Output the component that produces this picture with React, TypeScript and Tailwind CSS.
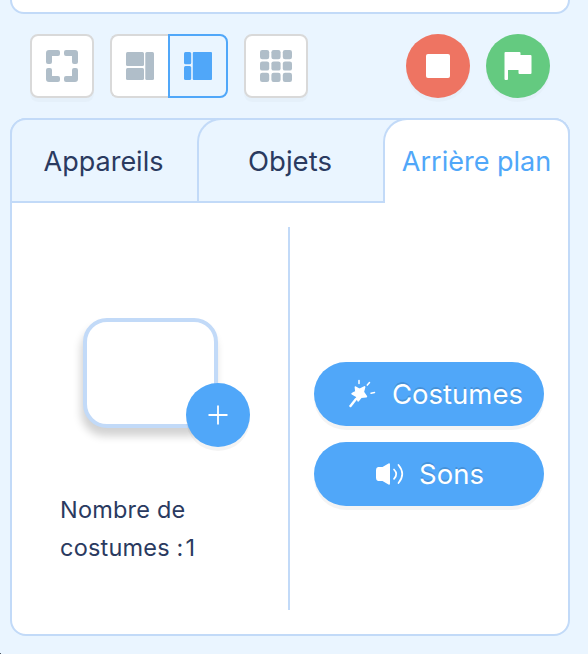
import React from 'react';

interface TabProps {
  label: string;
  className: string;
  textClass?: string;
}

const FullscreenIcon = () => (
  <svg width="32" height="32" viewBox="0 0 32 32" fill="#b0bec9">
    <path d="M3 0h9a2 2 0 0 1 2 2v2a2 2 0 0 1-2 2H6v6a2 2 0 0 1-2 2H2a2 2 0 0 1-2-2V3a3 3 0 0 1 3-3z" />
    <path d="M29 0H20a2 2 0 0 0-2 2v2a2 2 0 0 0 2 2h6v6a2 2 0 0 0 2 2h2a2 2 0 0 0 2-2V3a3 3 0 0 0-3-3z" />
    <path d="M3 32h9a2 2 0 0 0 2-2v-2a2 2 0 0 0-2-2H6v-6a2 2 0 0 0-2-2H2a2 2 0 0 0-2 2v9a3 3 0 0 0 3 3z" />
    <path d="M29 32H20a2 2 0 0 1-2-2v-2a2 2 0 0 1 2-2h6v-6a2 2 0 0 1 2-2h2a2 2 0 0 1 2 2v9a3 3 0 0 1-3 3z" />
  </svg>
);

const SmallStageIcon = () => (
  <svg width="28" height="28" viewBox="0 0 28 28" fill="#b0bec9">
    <rect width="18" height="14" rx="1.5" />
    <rect y="16" width="18" height="12" rx="1.5" />
    <rect x="19.3" width="8.7" height="28" rx="1.5" />
  </svg>
);

const LargeStageIcon = () => (
  <svg width="28" height="28" viewBox="0 0 28 28" fill="#50a7f9">
    <rect width="7.2" height="12.2" rx="1.5" />
    <rect y="14" width="7.2" height="14" rx="1.5" />
    <rect x="8.8" width="19.2" height="28" rx="1" />
  </svg>
);

const GridIcon = () => (
  <svg width="32" height="32" viewBox="0 0 32 32" fill="#b0bec9">
    {[0, 11.4, 22.8].map(y =>
      [0, 11.4, 22.8].map(x => <rect key={`${x}-${y}`} x={x} y={y} width="9.2" height="9.2" rx="2.2" />)
    )}
  </svg>
);

const FlagIcon = () => (
  <svg width="28" height="28" viewBox="0 0 28 28" fill="#fff">
    <path d="M1.5 0H15.500a1 1 0 0 1 1 1V3H26.500a1 1 0 0 1 1 1V21a1 1 0 0 1-1 1H15.500a1 1 0 0 1-1-1V18H4V27a1 1 0 0 1-1 1H1.500A1 1 0 0 1 .5 27V1a1 1 0 0 1 1-1z" />
  </svg>
);

const WandIcon = () => (
  <svg width="28" height="30" viewBox="0 0 28 30" fill="none" stroke="#fff" strokeLinecap="round" strokeLinejoin="round">
    <path d="M7.500 8.200 11.500 10.500 16.500 8 15.200 13 18.300 17.500 13.200 18 10.200 21.800 8.500 17.200 4.200 14.800 8 12.500z" fill="#fff" strokeWidth="1.800" />
    <path d="M2.500 27 8 20" strokeWidth="2.400" />
    <path d="M11 1.500v3M21.500 3.500l-2.200 2.600M23 14.200l3.500-.6" strokeWidth="1.500" />
  </svg>
);

const SpeakerIcon = () => (
  <svg width="28" height="22" viewBox="0 0 28 22" fill="none" stroke="#fff" strokeLinecap="round">
    <path d="M2 4H6.500L12.500 .4Q14 0 14 1.500V20.500Q14 22 12.500 21.600L6.500 18H2Q0 17.500 0 15V7Q0 4.500 2 4z" fill="#fff" stroke="none" />
    <path d="M18 6.500Q22.500 11 18 15.800" strokeWidth="1.700" />
    <path d="M22.500 2Q30 11 22.500 20" strokeWidth="1.700" />
  </svg>
);

const Tab: React.FC<TabProps> = ({ label, className, textClass = 'text-[27px]' }) => (
  <button className={`flex items-center justify-center border-[#c2daf8] whitespace-nowrap ${className}`}>
    <span className={textClass}>{label}</span>
  </button>
);

const App: React.FC = () => {
  return (
    <div className="relative h-[654px] w-[588px] overflow-hidden bg-[#eaf5ff] pr-[18px] pl-[10px] text-[#2a3a60] font-['Inter',sans-serif]">
      <div className="h-[14px] rounded-b-[16px] border-2 border-t-0 border-[#c2daf8] bg-white" />

      <div className="mt-5 flex h-16 px-5">
        <button className="flex size-16 items-center justify-center rounded-lg border-2 border-[#d9d9d9] bg-white shadow-[0_4px_0_rgba(0,0,0,0.02)]">
          <FullscreenIcon />
        </button>
        <div className="ml-4 flex">
          <button className="flex w-[58px] items-center justify-center rounded-l-lg border-2 border-r-0 border-[#d9d9d9] bg-white">
            <SmallStageIcon />
          </button>
          <button className="flex w-[60px] items-center justify-center rounded-r-lg border-2 border-[#50a7f9]">
            <LargeStageIcon />
          </button>
        </div>
        <button className="ml-4 flex size-16 items-center justify-center rounded-lg border-2 border-[#d9d9d9] bg-white shadow-[0_4px_0_rgba(0,0,0,0.02)]">
          <GridIcon />
        </button>
        <div className="ml-auto flex gap-4">
          <button className="flex size-16 items-center justify-center rounded-full bg-[#ee7462] shadow-[0_4px_0_rgba(0,0,0,0.02)]">
            <span className="size-6 rounded-[2px] bg-white" />
          </button>
          <button className="flex size-16 items-center justify-center rounded-full bg-[#64ca80] shadow-[0_4px_0_rgba(0,0,0,0.02)]">
            <FlagIcon />
          </button>
        </div>
      </div>

      <div className="mt-5 flex h-[518px] flex-col rounded-[16px] border-2 border-[#c2daf8] bg-white">
        <div className="-mx-[2px] -mt-[2px] flex h-[85px] rounded-t-[16px] border-2 border-b-0 border-[#c2daf8] bg-[#eaf5ff]">
          <Tab label="Appareils" className="w-[185px] border-b-2 pt-1 pr-[2px]" />
          <Tab
            label="Objets"
            className="-mt-[2px] w-[186px] rounded-tl-[24px] border-2 border-r-0 pt-[2px] pr-[2px]"
            textClass="text-[27.5px]"
          />
          <Tab
            label="Arrière plan"
            className="-mt-[2px] -mr-[2px] w-[187px] rounded-tl-[24px] rounded-tr-[16px] border-2 border-b-0 bg-white pt-[2px]"
            textClass="text-[27px] text-[#50a7f9]"
          />
        </div>

        <div className="mt-6 mb-6 flex flex-1">
          <div className="flex w-[278px] flex-col border-r-2 border-[#c2daf8] pt-[91px]">
            <div className="relative ml-[71px] h-[110px] w-[135px] rounded-[24px] border-4 border-[#c2daf8] bg-white shadow-[-2px_8px_8px_rgba(0,0,0,0.18)]">
              <button className="absolute top-[61px] left-[99px] flex size-16 items-center justify-center rounded-full bg-[#50a7f9] shadow-[0_4px_0_rgba(0,0,0,0.045)]">
                <svg width="20" height="20" viewBox="0 0 20 20" stroke="#fff" strokeWidth="1.800">
                  <path d="M10 .5v19M.5 10h19" />
                </svg>
              </button>
            </div>
            <p className="mt-[63px] ml-12 text-[23.5px] leading-[38px] tracking-[0.2px]">
              Nombre de
              <br />
              costumes :<span className="ml-[2px]">1</span>
            </p>
          </div>
          <div className="flex flex-1 flex-col items-center gap-4 pt-[135px] text-[27.5px] text-white">
            <button className="flex h-16 w-[230px] items-center rounded-full bg-[#50a7f9] pl-[34px] shadow-[0_4px_0_rgba(0,0,0,0.045)]">
              <WandIcon />
              <span className="ml-4 pt-[2px] [text-shadow:0_-2px_0_rgba(0,0,0,0.12)]">Costumes</span>
            </button>
            <button className="flex h-16 w-[230px] items-center rounded-full bg-[#50a7f9] pl-[62px] shadow-[0_4px_0_rgba(0,0,0,0.045)]">
              <SpeakerIcon />
              <span className="ml-[15px] pt-[2px] [text-shadow:0_-2px_0_rgba(0,0,0,0.12)]">Sons</span>
            </button>
          </div>
        </div>
      </div>

      <span className="absolute bottom-0 left-0 size-px bg-[#4b5563]" />
    </div>
  );
};

export default App;
